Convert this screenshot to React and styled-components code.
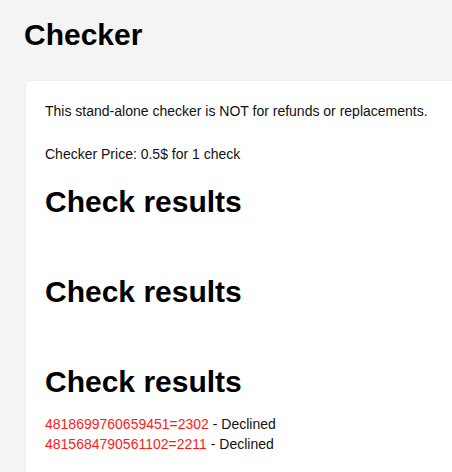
import React from 'react'
import styled, { createGlobalStyle } from 'styled-components'

const GlobalStyle = createGlobalStyle`
  html, body {
    margin: 0;
    padding: 0;
    background: #f4f4f4;
    overflow: hidden;
    font-family: "Liberation Sans", Arial, sans-serif;
    color: #111;
  }
`

const results = [
  { card: '4818699760659451=2302', status: 'Declined' },
  { card: '4815684790561102=2211', status: 'Declined' },
]

export default function App() {
  return (
    <Page>
      <GlobalStyle />
      <Title>Checker</Title>
      <Card>
        <Note>This stand-alone checker is NOT for refunds or replacements.</Note>
        <Note spaced>Checker Price: 0.5$ for 1 check</Note>
        <Section>
          <ResultsTitle>Check results</ResultsTitle>
        </Section>
        <Section>
          <ResultsTitle>Check results</ResultsTitle>
        </Section>
        <Section>
          <ResultsTitle>Check results</ResultsTitle>
          <ResultList>
            {results.map((r) => (
              <ResultRow key={r.card}>
                <CardNumber>{r.card}</CardNumber> - {r.status}
              </ResultRow>
            ))}
          </ResultList>
        </Section>
      </Card>
    </Page>
  )
}

const Page = styled.div`
  width: 452px;
  height: 472px;
  overflow: hidden;
  padding: 19px 0 0 24px;
  box-sizing: border-box;
`

const Title = styled.h1`
  margin: 0 0 29px 0;
  font-size: 30px;
  line-height: 32px;
  font-weight: bold;
  color: #000;
`

const Card = styled.div`
  width: 520px;
  background: #fff;
  border: 1px solid #efefef;
  border-radius: 4px;
  margin-left: 1px;
  padding: 20px 20px 40px 19px;
  min-height: 420px;
`

const Note = styled.p`
  margin: 0;
  margin-top: ${(p) => (p.spaced ? '23px' : '0')};
  font-size: 14px;
  line-height: 20px;
  color: #111;
`

const Section = styled.div`
  margin-top: 22px;
  & + & {
    margin-top: 58px;
  }
`

const ResultsTitle = styled.h2`
  margin: 0;
  font-size: 30px;
  line-height: 32px;
  font-weight: bold;
  color: #000;
`

const ResultList = styled.div`
  margin-top: 16px;
`

const ResultRow = styled.div`
  font-size: 14px;
  line-height: 20px;
  color: #111;
`

const CardNumber = styled.span`
  color: #ff1a1a;
`
